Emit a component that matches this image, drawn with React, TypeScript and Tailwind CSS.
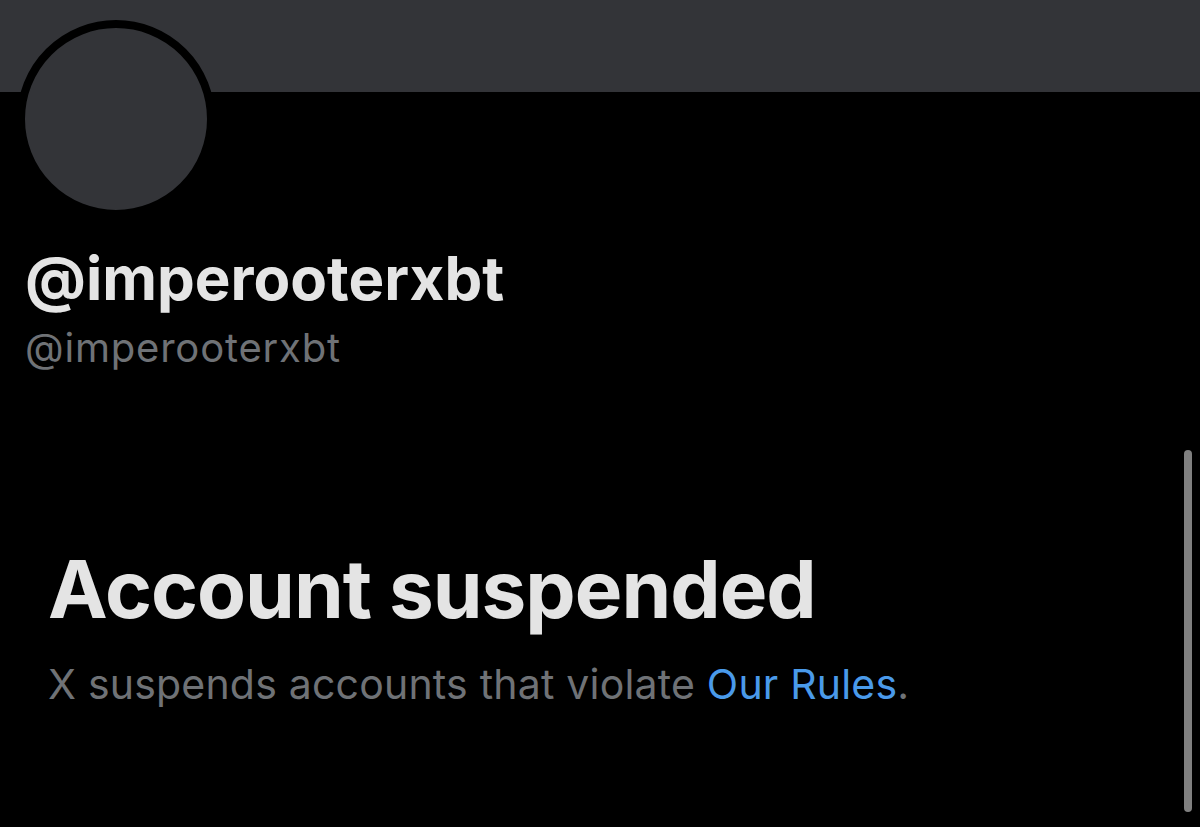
export default function App() {
  return (
    <div className="relative h-[827px] w-[1200px] overflow-hidden bg-black font-['Inter','Noto_Sans',sans-serif]">
      {/* Header banner */}
      <div className="h-[92px] bg-[#333438]" />

      {/* Avatar */}
      <div className="-mt-[72px] pl-[17px]">
        <div className="h-[198px] w-[198px] rounded-full border-[8px] border-black bg-[#333438]" />
      </div>

      {/* Names */}
      <div className="mt-[30px] pl-[25px]">
        <h1 className="text-[60px] leading-none font-bold text-[#e4e4e4]">@imperooterxbt</h1>
        <p className="mt-[20px] text-[40px] leading-none tracking-[0.8px] text-[#6f7276]">
          @imperooterxbt
        </p>
      </div>

      {/* Suspended notice */}
      <div className="mt-[181px] pl-[48px]">
        <h2 className="text-[80px] leading-none font-bold tracking-[-1px] text-[#e4e4e4]">
          Account suspended
        </h2>
        <p className="mt-[35px] text-[41px] leading-none tracking-[0.2px] text-[#6f7276]">
          X suspends accounts that violate{" "}
          <a href="#" className="text-[#4a9aea]">
            Our Rules
          </a>
          .
        </p>
      </div>

      {/* Scrollbar */}
      <div className="absolute top-[450px] left-[1184px] h-[362px] w-[8px] rounded-full bg-[#808080]" />
    </div>
  );
}
